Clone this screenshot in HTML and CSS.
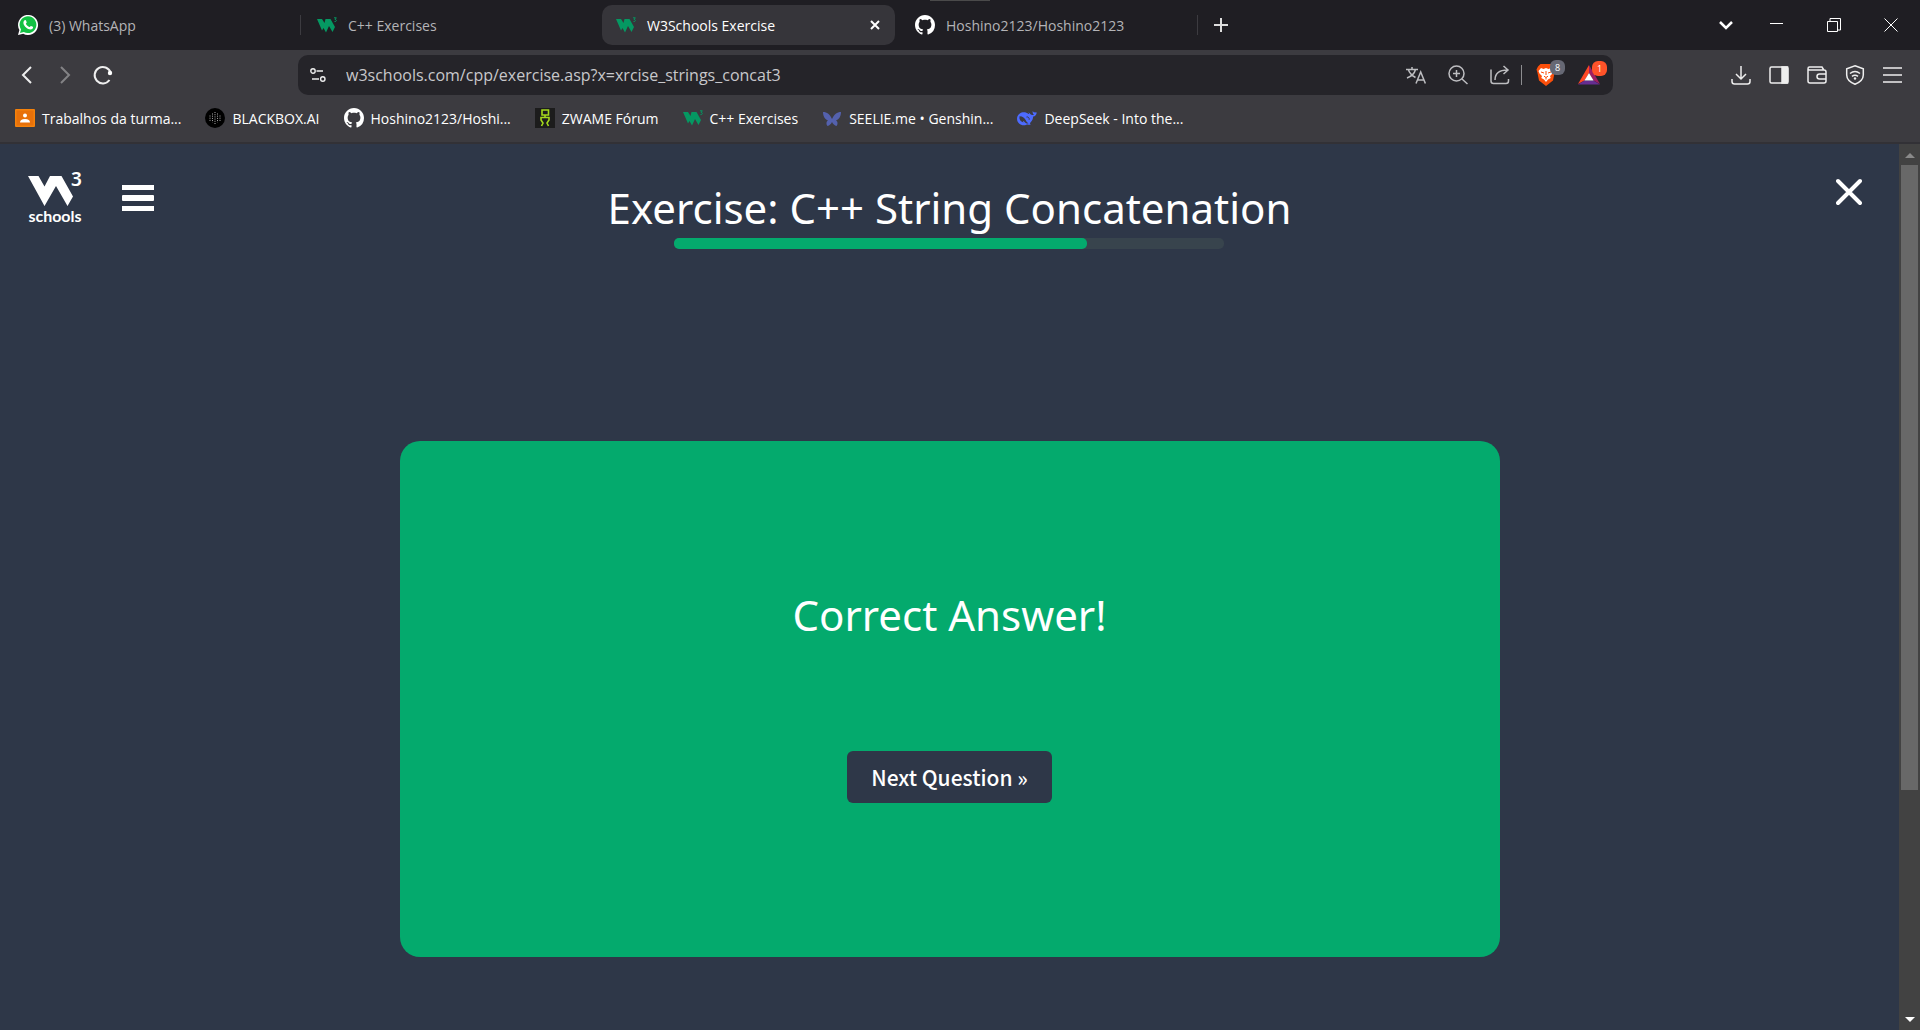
FILE: index.html
```html
<!DOCTYPE html>
<html lang="en">
<head>
<meta charset="utf-8">
<title>W3Schools Exercise</title>
<link rel="stylesheet" href="styles.css">
</head>
<body>
<svg class="defs" aria-hidden="true">
  <symbol id="w3" viewBox="0 0 20 16"><path fill="#059862" d="M0 2h5l2.500 4 1-4h5l4.500 8-2.500 5-3.500-6-3 6.500L6.500 11 5 13.500z"/><path fill="none" stroke="#059862" stroke-width="1" d="M17 .8h2.300l-1.200 1.700c1.800 0 1.800 2.300-.6 2.100"/></symbol>
  <symbol id="github" viewBox="0 0 16 16"><path fill="#fff" d="M8 0C3.580 0 0 3.580 0 8c0 3.540 2.290 6.530 5.470 7.590.4.070.55-.17.55-.38 0-.19-.01-.82-.01-1.490-2.010.37-2.530-.49-2.690-.94-.09-.23-.48-.94-.82-1.130-.28-.15-.68-.52-.01-.53.63-.01 1.080.58 1.230.82.720 1.210 1.870.87 2.330.66.070-.52.28-.87.510-1.070-1.780-.2-3.640-.89-3.640-3.950 0-.87.310-1.590.82-2.150-.08-.2-.36-1.020.08-2.120 0 0 .67-.21 2.200.82.640-.18 1.320-.27 2-.27s1.360.09 2 .27c1.530-1.040 2.200-.82 2.200-.82.440 1.100.16 1.920.08 2.120.51.560.82 1.270.82 2.150 0 3.070-1.870 3.750-3.650 3.950.29.250.54.730.54 1.480 0 1.070-.01 1.930-.01 2.200 0 .21.150.46.550.38A8.010 8.010 0 0 0 16 8c0-4.420-3.580-8-8-8z"/></symbol>
</svg>

<div class="tabstrip">
  <i class="handle"></i>
  <ul class="tabs">
    <li><a class="tab" href="#"><svg class="fav" viewBox="0 0 20 20"><path fill="#fff" d="M0 20l1.400-5A10 10 0 1 1 5.200 18.700z"/><path fill="#12c143" d="M2 18l1-3.600A8.400 8.400 0 1 1 5.800 17z"/><path fill="#fff" d="M6.600 5.300c.6-.5 1.200-.3 1.400.2l.7 1.700c.1.500-.8 1.200-.8 1.500.8 1.700 2 2.600 3.600 3.300.5 0 1-1.200 1.500-1.100l1.900.9c.5.400 0 1.800-.7 2.300-1.600 1.100-4.400.1-6.400-1.800C5.600 10.300 4.400 7.200 6.600 5.300z"/></svg><span>(3) WhatsApp</span></a><i class="sep"></i></li>
    <li><a class="tab" href="#"><svg class="fav"><use href="#w3"/></svg><span>C++ Exercises</span></a></li>
    <li><div class="tab active"><svg class="fav"><use href="#w3"/></svg><span>W3Schools Exercise</span><button class="tab-close" aria-label="Close tab"><svg width="10" height="10" viewBox="0 0 10 10"><path d="M1 1l8 8M9 1L1 9" stroke="#fff" stroke-width="2"/></svg></button></div></li>
    <li><a class="tab" href="#"><svg class="fav"><use href="#github"/></svg><span>Hoshino2123/Hoshino2123</span></a><i class="sep"></i></li>
  </ul>
  <button class="new-tab" aria-label="New tab"><svg width="14" height="14" viewBox="0 0 14 14"><path d="M7 0v14M0 7h14" stroke="#ddd" stroke-width="2"/></svg></button>
  <div class="window-controls">
    <button aria-label="Search tabs"><svg viewBox="0 0 14 14"><path d="M1 4l6 6 6-6" stroke-width="2.500"/></svg></button>
    <button aria-label="Minimize"><svg viewBox="0 0 14 14"><path d="M0 5.500h13"/></svg></button>
    <button aria-label="Restore"><svg viewBox="0 0 14 14"><path d="M.5 3.500h10v10H.5zM3 3V.5h10.500V12H11"/></svg></button>
    <button aria-label="Close window"><svg viewBox="0 0 14 14"><path d="M.5 0.500l13 13M13.500.5l-13 13"/></svg></button>
  </div>
</div>

<div class="toolbar">
  <div class="nav-buttons">
    <button aria-label="Back"><svg viewBox="0 0 20 20"><path d="M14 2l-8 8 8 8"/></svg></button>
    <button aria-label="Forward" disabled><svg viewBox="0 0 20 20"><path d="M6 2l8 8-8 8"/></svg></button>
    <button aria-label="Reload"><svg viewBox="0 0 20 20"><path d="M16.500 15A8.200 8.200 0 1 1 17.600 7.500"/><circle cx="17" cy="8" r="2.200" fill="#fff" stroke="none"/></svg></button>
  </div>
  <form class="address">
    <svg class="tune" viewBox="0 0 16 16"><circle cx="3" cy="4" r="2.200"/><path d="M6.500 4H13M2 12h7"/><circle cx="12.800" cy="12" r="2.200"/></svg>
    <input type="text" aria-label="Address" value="w3schools.com/cpp/exercise.asp?x=xrcise_strings_concat3">
    <div class="address-actions">
      <button type="button" aria-label="Translate"><svg viewBox="0 0 20 20"><path d="M0 4.500h12M6 2v2.500M9.500 4.500c-1 4-4.500 7-8.500 8.500M2.500 5c1 3 3.500 5.500 7 7.500M10 18.500L14.700 7l4.700 11.500M11.500 15H18"/></svg></button>
      <button type="button" aria-label="Zoom"><svg viewBox="0 0 20 20"><circle cx="8.500" cy="8.500" r="7.500"/><path d="M14 14l5.500 5M8.500 5v7M5 8.500h7"/></svg></button>
      <button type="button" aria-label="Share"><svg viewBox="0 0 20 20"><path d="M1 4.500V16q0 2.500 2.500 2.500H16q2.500 0 2.500-2.500v-2M5 15c0-6 4-10 12.500-10M13.500 1l4.500 4-4.500 4"/></svg></button>
      <i class="bar"></i>
      <button type="button" class="badged" aria-label="Brave Shields"><svg viewBox="0 0 20 22"><path fill="#fb4f0b" stroke="none" d="M4.500 0h11L18 2.500l1.500 3-1 3.500-1.500 7.500L10 22l-7-5.500L1.500 9l-1-3.500 1.500-3z"/><path fill="#fff" stroke="none" d="M5 4l2.500 1L10 4l2.500 1L15 4l2.500 3-1 2.500-2.500 2.500.7 2-2.700 1.500L10 18l-2-2.500L5.300 14l.7-2-2.500-2.500L2.500 7z"/><path stroke="#fb4f0b" stroke-width="1" d="M5 8l3 1M15 8l-3 1M10 7v4M8 12.200l2 1.300 2-1.300M10 13.500v2"/></svg><span class="badge">8</span></button>
      <button type="button" class="badged rewards" aria-label="Brave Rewards"><svg viewBox="0 0 22 20"><path fill="#ff4724" stroke="none" d="M11 0L0 19l6.500-3.500L11 8z"/><path fill="#9e1f63" stroke="none" d="M11 0l11 19-6.500-3.500L11 8z"/><path fill="#662d91" stroke="none" d="M0 19.500l6.500-4h9l6.500 4z"/><path fill="#fff" stroke="none" d="M11 8l4.600 7.600H6.400z"/></svg><span class="badge">1</span></button>
    </div>
  </form>
  <div class="tools">
    <button aria-label="Downloads"><svg viewBox="0 0 20 20"><path d="M10 1v12M5 9l5 5 5-5M1 14v2.500Q1 19 3.500 19h13q2.500 0 2.500-2.500V14"/></svg></button>
    <button aria-label="Sidebar"><svg viewBox="0 0 20 20"><rect x="1" y="2" width="18" height="16" rx="1.500"/><path d="M13 2h5.500v16H13z" fill="#eee"/></svg></button>
    <button aria-label="Wallet"><svg viewBox="0 0 20 20"><path d="M1 4v12q0 2 2 2h14q2 0 2-2V7q0-2-2-2H2.500Q1 5 1 3.500T2.500 2H15l1.500 2.500M19 9h-6.500Q10 9 10 11.500t2.500 2.500H19"/></svg></button>
    <button aria-label="VPN"><svg viewBox="0 0 20 20"><path d="M10 .8l8.300 3V10c0 4.500-4 7.500-8.300 9.300C5.700 17.500 1.700 14.500 1.700 10V3.800zM5 8.500q5-4 10 0M7 11.300q3-2.300 6 0"/><circle cx="10" cy="13.500" r="1.200" fill="#eee" stroke="none"/></svg></button>
    <button aria-label="Menu"><svg viewBox="0 0 20 20"><path d="M0 3h19M0 10h19M0 17h19"/></svg></button>
  </div>
</div>

<nav class="bookmarks" aria-label="Bookmarks">
  <a href="#"><svg class="fav" viewBox="0 0 20 20"><rect y="1" width="20" height="18" rx="1" fill="#f5820b"/><rect x="1.500" y="2.500" width="17" height="15" fill="#e8710a"/><circle cx="10" cy="7.500" r="2" fill="#fff"/><path fill="#fff" d="M5 14.500q0-3.500 5-3.500t5 3.500z"/></svg><span>Trabalhos da turma...</span></a>
  <a href="#"><svg class="fav" viewBox="0 0 20 20"><circle cx="10" cy="10" r="10"/><path stroke="#aaa" stroke-width="1" stroke-dasharray="1 1.200" d="M10 4v12M7.500 5.500v9M12.500 5.500v9M5 7.500v5.500M15 7.500v5.500"/></svg><span>BLACKBOX.AI</span></a>
  <a href="#"><svg class="fav"><use href="#github"/></svg><span>Hoshino2123/Hoshi...</span></a>
  <a href="#"><svg class="fav" viewBox="0 0 20 20"><path fill="#1c1c1c" d="M0 0h20v20H0z"/><path fill="none" stroke="#a4d91c" stroke-width="1.600" d="M7 2h6.500v5H7zM10 7v2M6.500 18l1.500-3-2-3V9.500h8V12l-2 3 1.500 3"/></svg><span>ZWAME Fórum</span></a>
  <a href="#"><svg class="fav"><use href="#w3"/></svg><span>C++ Exercises</span></a>
  <a href="#"><svg class="fav" viewBox="0 0 20 20"><path fill="#5461ad" d="M1 4c4 0 7 2.500 9 7 2-4.500 5-7 9-7 0 4-2 7.500-5 8.500 2 1 2 4 .5 5.500-2-.5-3.500-2-4.500-4-1 2-2.500 3.500-4.500 4-1.500-1.500-1.500-4.500.5-5.500C3 11.500 1 8 1 4z"/></svg><span>SEELIE.me • Genshin...</span></a>
  <a href="#"><svg class="fav" viewBox="0 0 20 20"><path fill="#4d6bfe" d="M19.800 4.200c-1.300.6-1.800-.2-2.600.2-.4.300-1-1.200-1.700-1.200.3 2 .3 2.800 1.600 3.800-1.800.4-3.200-.5-4.300-1.600L11.300 4c.6 1.200 1.200 2 .2 2C8 2.500 1 4 .1 9.800-.6 15 4 18 8 17.200c1-.2 1.900-.8 2.500-.8 1 .5 2.300.7 3 0 .5-.5-.8-.6-.7-1.200 2.900-2.600 3-4 3.400-6.600 2-.2 3.300-2 3.600-4.400z"/><path fill="#3c3b40" d="M2.500 8.200c3.300 0 5.200 1.800 6.300 4 .8 1.700 1.900 2.700 2.900 3.300-2 .4-3.500-.6-4.700-2-.9-1-1.200 0-.5.900C3.400 13.600 2 11.500 2.500 8.200z"/><path fill="none" stroke="#3c3b40" stroke-width="1" d="M9.500 9c1.700-.5 3 1 2.700 2.700"/></svg><span>DeepSeek - Into the...</span></a>
</nav>

<div class="viewport">
  <main class="page">
    <header class="page-header">
      <div class="brand">
        <a class="logo" href="#" aria-label="W3Schools">
          <svg width="54" height="64" viewBox="0 -8 54 64" fill="#fff"><path d="M0 4h10.500l6 10.500L22 4h11.500L45 24.500 39.500 34 28 14 16.500 34z"/><text x="43" y="14" class="logo-three">3</text><text x="27" y="50" text-anchor="middle" class="logo-word">schools</text></svg>
        </a>
        <button class="menu" aria-label="Exercise list"><svg width="32" height="26" viewBox="0 0 32 26" fill="#fff"><path d="M0 0h32v5H0zM0 21h32v5H0z"/><rect y="10" width="32" height="6" rx="1"/></svg></button>
      </div>
      <div class="heading">
        <h1>Exercise: C++ String Concatenation</h1>
        <div class="progress" role="progressbar" aria-label="Progress" aria-valuenow="75" aria-valuemin="0" aria-valuemax="100"><div class="progress-fill" style="width:75%"></div></div>
      </div>
      <button class="close" aria-label="Close exercise"><svg width="26" height="28" viewBox="0 0 26 28"><path d="M2 3l22 22M24 3L2 25" stroke="#fff" stroke-width="4" stroke-linecap="round"/></svg></button>
    </header>
    <section class="card">
      <h2>Correct Answer!</h2>
      <button class="next">Next Question »</button>
    </section>
  </main>
  <div class="scrollbar" aria-hidden="true">
    <svg class="arrow" viewBox="0 0 10 5"><path fill="#8a8a8a" d="M0 5l5-5 5 5z"/></svg>
    <div class="track"><div class="thumb"></div></div>
    <svg class="arrow" viewBox="0 0 10 5"><path fill="#fff" d="M0 0l5 5 5-5z"/></svg>
  </div>
</div>
</body>
</html>
```

FILE: styles.css
```css
* { box-sizing: border-box; }

body {
  margin: 0;
  min-height: 100vh;
  display: flex;
  flex-direction: column;
  background: #3c3b40;
  color: #fff;
  font-family: "Open Sans", "Noto Sans", sans-serif;
  font-size: 14px;
}

button {
  padding: 0;
  border: 0;
  background: none;
  color: inherit;
  font: inherit;
  display: flex;
  align-items: center;
  justify-content: center;
}

a { color: inherit; text-decoration: none; }

.defs { position: absolute; width: 0; height: 0; }
.fav { width: 20px; height: 20px; flex: none; }

/* Tab strip */
.tabstrip {
  position: relative;
  height: 50px;
  display: flex;
  align-items: center;
  padding-left: 4px;
  background: #1f1e23;
}
.handle {
  position: absolute;
  top: 0;
  left: 50%;
  width: 60px;
  height: 1px;
  margin-left: -30px;
  background: #4a4a4a;
}
.tabs { display: flex; margin: 0; padding: 0; list-style: none; }
.tabs li { width: 299px; display: flex; align-items: center; gap: 3px; }
.tab {
  width: 293px;
  height: 40px;
  padding: 0 15px 0 14px;
  display: flex;
  align-items: center;
  gap: 11px;
  border-radius: 10px;
  color: #b4b4b7;
}
.tab.active { background: #36353a; color: #fff; }
.tab-close { margin-left: auto; }
.sep { width: 1px; height: 20px; background: #3c3b40; }
.new-tab { margin-left: 14px; }
.window-controls { margin-left: auto; display: flex; padding-right: 22px; gap: 43px; }
.window-controls svg { width: 14px; height: 14px; fill: none; stroke: #fff; }
.window-controls button:first-child { margin-right: -6px; }

/* Toolbar */
.toolbar { height: 50px; display: flex; align-items: center; padding: 0 17px; }
.toolbar svg { width: 20px; height: 20px; fill: none; stroke: #eee; stroke-width: 2; }
.nav-buttons { width: 281px; display: flex; gap: 18px; }
.nav-buttons button:disabled { opacity: .4; }
.address {
  flex: 1;
  height: 40px;
  display: flex;
  align-items: center;
  padding: 0 13px 0 12px;
  border-radius: 10px;
  background: #252429;
}
.address svg.tune { width: 16px; height: 16px; stroke-width: 1.4; }
.address input {
  flex: 1;
  min-width: 0;
  margin-left: 20px;
  padding: 0;
  border: 0;
  outline: 0;
  background: none;
  color: #c8c8cb;
  font: 400 16px "Open Sans", "Noto Sans", sans-serif;
}
.address-actions { display: flex; align-items: center; }
.address-actions button { margin-right: 22px; }
.address-actions button svg { stroke: #bdbdc0; stroke-width: 1.5; }
.address-actions button:nth-child(3) { margin-right: 11px; }
.bar { width: 1px; height: 20px; margin-right: 14px; background: #8d8d90; }
.address-actions .badged { position: relative; }
.address-actions .rewards { margin: 0; }
.address-actions .badged svg { height: 22px; width: 20px; }
.address-actions .rewards svg { width: 22px; height: 20px; }
.badge {
  position: absolute;
  left: 14px;
  top: -4px;
  width: 15px;
  height: 15px;
  border-radius: 6px;
  background: #666874;
  font-size: 9px;
  line-height: 15px;
}
.rewards .badge { background: #ff5329; }
.tools { display: flex; gap: 18px; margin-left: 118px; }
.toolbar .tools svg { stroke-width: 1.5; }

/* Bookmarks */
.bookmarks {
  height: 44px;
  display: flex;
  align-items: center;
  gap: 24px;
  padding: 0 15px 6px;
  border-bottom: 2px solid #323136;
}
.bookmarks a { display: flex; align-items: center; gap: 7px; white-space: nowrap; }

/* Page */
.viewport { flex: 1; display: flex; }
.page { flex: 1; padding: 28px 28px 72px; background: #2e3748; }
.page-header { display: grid; grid-template-columns: 1fr auto 1fr; align-items: start; }
.brand { display: flex; align-items: flex-start; gap: 40px; }
.logo { margin-top: -8px; }
.logo svg { display: block; }
.logo-three { font: 600 19px "Noto Sans", sans-serif; }
.logo-word { font: 700 16px "Lato", sans-serif; }
.menu { margin-top: 13px; }
.heading { margin-top: 6px; display: flex; flex-direction: column; align-items: center; }
h1, h2 {
  margin: 0;
  font: 400 42px/60px "Noto Sans", sans-serif;
  text-align: center;
}
.progress { width: 550px; max-width: 100%; height: 11px; border-radius: 5px; background: #38444d; }
.progress-fill { height: 100%; border-radius: 5px; background: #04aa6d; }
.close { margin: 6px 9px 0 0; justify-self: end; }
.card {
  max-width: 1100px;
  margin: 192px auto 0;
  padding: 144px 20px 154px;
  display: flex;
  flex-direction: column;
  align-items: center;
  gap: 106px;
  border-radius: 20px;
  background: #04aa6d;
}
.next {
  height: 52px;
  padding: 0 24px;
  border-radius: 6px;
  background: #2e3748;
  font: 500 21px "Noto Sans CJK SC", sans-serif;
}

/* Scrollbar */
.scrollbar {
  width: 21px;
  padding: 9px 2px 8px;
  display: flex;
  flex-direction: column;
  align-items: center;
  background: #424242;
}
.arrow { width: 10px; height: 5px; flex: none; }
.track { flex: 1; width: 17px; margin: 7px 0; }
.thumb { height: 74%; background: #686868; }
```
